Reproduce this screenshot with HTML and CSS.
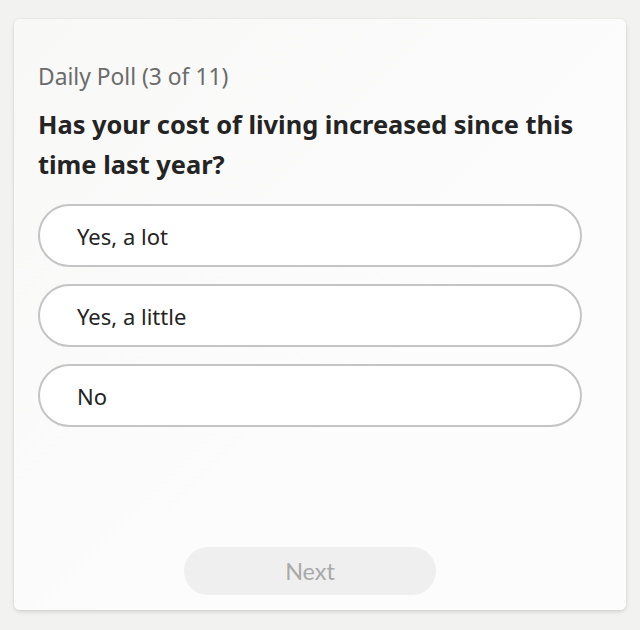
FILE: index.html
```html
<!DOCTYPE html>
<html>
<head>
<meta charset="utf-8">
<link rel="stylesheet" href="styles.css">
</head>
<body>
<div class="card">
  <div class="label">Daily Poll (3 of 11)</div>
  <h1 class="question">Has your cost of living increased since this time last year?</h1>
  <div class="options">
    <button class="option">Yes, a lot</button>
    <button class="option">Yes, a little</button>
    <button class="option">No</button>
  </div>
  <div class="footer">
    <button class="next" disabled>Next</button>
  </div>
</div>
</body>
</html>
```
FILE: styles.css
```css
html, body {
  margin: 0;
  padding: 0;
  background: #f2f2f1;
  width: 640px;
  height: 630px;
  overflow: hidden;
}
body {
  padding: 19px 14px 20px 14px;
  box-sizing: border-box;
  font-family: "Noto Sans", "Open Sans", sans-serif;
}
.card {
  box-sizing: border-box;
  width: 612px;
  height: 591px;
  background: linear-gradient(135deg, #f8f8f7 0%, #fcfcfc 60%, #fcfcfc 100%);
  border-radius: 6px;
  box-shadow: 0 2px 4px rgba(0,0,0,0.12), 0 0 2px rgba(0,0,0,0.08);
  padding: 43px 44px 15px 24px;
  display: flex;
  flex-direction: column;
}
.label {
  font-size: 22.8px;
  line-height: 30px;
  color: #6b6b6b;
}
.question {
  margin: 12px 0 0 0;
  font-size: 25.4px;
  line-height: 40px;
  font-weight: 700;
  color: #242424;
}
.options {
  margin-top: 20px;
  display: flex;
  flex-direction: column;
  gap: 17px;
}
.option {
  box-sizing: border-box;
  height: 63px;
  border: 2px solid #c4c4c4;
  border-radius: 32px;
  background: #fff;
  text-align: left;
  padding: 0 0 0 37px;
  font-family: inherit;
  font-size: 22px;
  color: #242424;
}
.footer {
  margin-top: auto;
  display: flex;
  justify-content: center;
}
.next {
  width: 252px;
  height: 48px;
  border: none;
  border-radius: 24px;
  background: #efefef;
  color: #a9a9a9;
  font-family: "Lato", sans-serif;
  font-size: 23.4px;
}
```
